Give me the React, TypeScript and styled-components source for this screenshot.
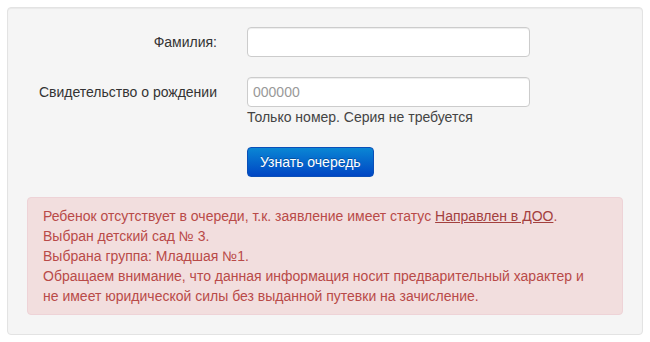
import React from 'react'
import styled, { createGlobalStyle } from 'styled-components'

const GlobalStyle = createGlobalStyle`
  html, body {
    margin: 0;
    padding: 0;
    background: #fff;
  }
  body {
    font-family: "Liberation Sans", Arial, sans-serif;
    font-size: 14px;
    line-height: 20px;
    color: #333;
  }
`

const Page = styled.div`
  padding: 7px;
`

const Well = styled.div`
  background: #f5f5f5;
  border: 1px solid #e3e3e3;
  border-radius: 4px;
  box-shadow: inset 0 1px 1px rgba(0, 0, 0, 0.05);
  padding: 19px;
`

const Form = styled.form`
  display: flex;
  flex-direction: column;
  gap: 20px;
`

const Row = styled.div`
  display: grid;
  grid-template-columns: 190px 283px;
  column-gap: 30px;
  align-items: start;
`

const Label = styled.label`
  text-align: right;
  line-height: 30px;
  height: 30px;
  font-weight: normal;
`

const Field = styled.div`
  display: flex;
  flex-direction: column;
`

const Input = styled.input`
  box-sizing: border-box;
  width: 283px;
  height: 30px;
  padding: 4px 5px;
  border: 1px solid #ccc;
  border-radius: 4px;
  background: #fff;
  box-shadow: inset 0 1px 1px rgba(0, 0, 0, 0.075);
  font-family: inherit;
  font-size: 14px;
  color: #555;
  outline: none;

  &::placeholder {
    color: #999;
  }
`

const Help = styled.span`
  color: #444;
  line-height: 20px;
`

const Button = styled.button`
  box-sizing: border-box;
  height: 30px;
  padding: 0 12px;
  border: 1px solid #0a4fb8;
  border-radius: 4px;
  background: linear-gradient(to bottom, #0a86d4, #0046c4);
  color: #fff;
  font-family: inherit;
  font-size: 14px;
  text-shadow: 0 -1px 0 rgba(0, 0, 0, 0.25);
  cursor: pointer;
  justify-self: start;
`

const Alert = styled.div`
  background: #f2dede;
  border: 1px solid #eed3d7;
  border-radius: 4px;
  color: #b94a48;
  padding: 8px 15px;
  line-height: 20px;
`

const AlertLink = styled.a`
  color: #a3403e;
  text-decoration: underline;
`

export default function App() {
  return (
    <Page>
      <GlobalStyle />
      <Well>
        <Form onSubmit={(e) => e.preventDefault()}>
          <Row>
            <Label htmlFor="surname">Фамилия:</Label>
            <Input id="surname" type="text" />
          </Row>
          <Row>
            <Label htmlFor="cert">Свидетельство о рождении</Label>
            <Field>
              <Input id="cert" type="text" placeholder="000000" />
              <Help>Только номер. Серия не требуется</Help>
            </Field>
          </Row>
          <Row>
            <span />
            <Button type="submit">Узнать очередь</Button>
          </Row>
          <Alert>
            Ребенок отсутствует в очереди, т.к. заявление имеет статус{' '}
            <AlertLink href="#">Направлен в ДОО</AlertLink>.
            <br />
            Выбран детский сад № 3.
            <br />
            Выбрана группа: Младшая №1.
            <br />
            Обращаем внимание, что данная информация носит предварительный характер и
            <br />
            не имеет юридической силы без выданной путевки на зачисление.
          </Alert>
        </Form>
      </Well>
    </Page>
  )
}
